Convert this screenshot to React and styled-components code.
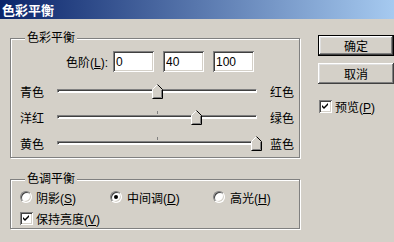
import React from "react";
import styled, { createGlobalStyle } from "styled-components";

/* ---------- global ---------- */

const GlobalStyle = createGlobalStyle`
  html, body {
    margin: 0;
    padding: 0;
    background: #d4d0c8;
  }
  body {
    width: 394px;
    height: 242px;
    overflow: hidden;
    font-family: "Liberation Sans", "Noto Sans CJK SC", sans-serif;
    font-size: 12px;
    color: #000;
  }
`;

/* ---------- styled components ---------- */

const Window = styled.div`
  width: 394px;
  height: 242px;
  background: #d4d0c8;
  display: flex;
  flex-direction: column;
  overflow: hidden;
`;

const TitleBar = styled.div`
  flex: none;
  height: 19px;
  padding-left: 2px;
  background: linear-gradient(to right, #0a246a, #a6caf0);
  color: #fff;
  font-weight: bold;
  font-size: 13px;
  line-height: 19px;
  font-family: "Noto Sans CJK SC", sans-serif;
`;

const Body = styled.div`
  display: flex;
  padding: 12px 0 0 10px;
`;

const LeftColumn = styled.div`
  width: 293px;
  display: flex;
  flex-direction: column;
  gap: 14px;
`;

const RightColumn = styled.div`
  margin: 4px 0 0 18px;
  display: flex;
  flex-direction: column;
`;

const Group = styled.fieldset`
  margin: 0;
  padding: 0 0 ${({ $pb }) => $pb}px;
  min-width: 0;
  border: 1px solid #808080;
  box-shadow: inset 1px 1px 0 #fff, 1px 1px 0 #fff;
`;

const Legend = styled.legend`
  margin-left: 14px;
  padding: 0 2px;
  line-height: 14px;
  background: #d4d0c8;
`;

const LevelRow = styled.div`
  display: flex;
  align-items: center;
  margin-top: 6px;
`;

const LevelLabel = styled.span`
  width: 97px;
  margin-right: 5px;
  text-align: right;
`;

const Inputs = styled.div`
  display: flex;
  gap: 9px;
`;

const NumberBox = styled.input`
  box-sizing: border-box;
  width: 41px;
  height: 21px;
  margin: 0;
  padding: 0 3px;
  border: none;
  outline: none;
  background: #fff;
  font-family: "Liberation Sans", sans-serif;
  font-size: 12px;
  color: #000;
  box-shadow: inset 1px 1px 0 #808080, inset -1px -1px 0 #fff,
    inset 2px 2px 0 #404040, inset -2px -2px 0 #d4d0c8;
`;

const Sliders = styled.div`
  margin-top: 6px;
`;

const SliderRow = styled.div`
  display: flex;
  align-items: center;
  height: 26px;
  padding-left: 9px;
`;

const SideLabel = styled.span`
  width: 37px;
  flex: none;
`;

const RightLabel = styled.span`
  margin-left: 13px;
`;

const Track = styled.div`
  position: relative;
  box-sizing: border-box;
  width: 200px;
  height: 4px;
  background: #fff;
  border: 1px solid;
  border-color: #808080 #fff #fff #808080;
  box-shadow: inset 1px 1px 0 #404040;
`;

const Tick = styled.div`
  position: absolute;
  left: 99px;
  top: -5px;
  width: 1px;
  height: 3px;
  background: #808080;
`;

const ThumbWrap = styled.svg`
  position: absolute;
  top: -6px;
  display: block;
`;

const OptionRow = styled.div`
  display: flex;
  align-items: center;
  height: 16px;
  padding-left: 9px;
  margin-top: ${({ $mt }) => $mt}px;
`;

const Option = styled.label`
  display: flex;
  align-items: center;
  width: ${({ $w }) => ($w ? `${$w}px` : "auto")};
  gap: ${({ $gap }) => $gap}px;
`;

const RadioDot = styled.span`
  position: relative;
  box-sizing: border-box;
  width: 12px;
  height: 12px;
  flex: none;
  border-radius: 50%;
  background: #fff;
  border: 1px solid;
  border-color: #808080 #fff #fff #808080;
  box-shadow: inset 1px 1px 0 #404040, inset -1px -1px 0 #d4d0c8;

  &::after {
    content: "";
    display: ${({ $on }) => ($on ? "block" : "none")};
    position: absolute;
    left: 3px;
    top: 3px;
    width: 4px;
    height: 4px;
    border-radius: 50%;
    background: #000;
  }
`;

const CheckBox = styled.span`
  box-sizing: border-box;
  width: 13px;
  height: 13px;
  flex: none;
  background: #fff;
  display: flex;
  align-items: center;
  justify-content: center;
  box-shadow: inset 1px 1px 0 #808080, inset -1px -1px 0 #fff,
    inset 2px 2px 0 #404040, inset -2px -2px 0 #d4d0c8;
`;

const Button = styled.button`
  box-sizing: border-box;
  width: 76px;
  height: 21px;
  margin: 0 0 ${({ $mb }) => $mb}px;
  padding: 0;
  background: #d4d0c8;
  font-family: "Liberation Sans", "Noto Sans CJK SC", sans-serif;
  font-size: 12px;
  color: #000;
  border: ${({ $default }) => ($default ? "1px solid #000" : "none")};
  box-shadow: inset -1px -1px 0 #404040, inset 1px 1px 0 #fff,
    inset -2px -2px 0 #808080, inset 2px 2px 0 #dfdfdf;
`;

const PreviewRow = styled.label`
  display: flex;
  align-items: center;
  gap: 3px;
  margin-left: 1px;
`;

/* ---------- parts ---------- */

const Thumb = ({ value }) => {
  const x = ((value + 100) / 200) * 198;
  return (
    <ThumbWrap width="11" height="15" viewBox="0 0 11 15" style={{ left: x - 5.5 }}>
      <polygon points="0.5,5.5 5.5,0.5 10.5,5.5 10.5,14.5 0.5,14.5" fill="#d4d0c8" />
      <path d="M0.5 14 V5.5 L5.5 0.5" stroke="#fff" fill="none" />
      <path d="M5.5 0.5 L10.5 5.5 V14.5 H0.5" stroke="#000" fill="none" />
      <path d="M9.5 6 V13.5 H1.5" stroke="#808080" fill="none" />
    </ThumbWrap>
  );
};

const Check = () => (
  <svg width="7" height="7" viewBox="0 0 7 7">
    <path d="M0 2 L2 4 L6 0 V2 L2 6 L0 4 Z" fill="#000" />
  </svg>
);

const sliders = [
  { left: "青色", right: "红色", value: 0 },
  { left: "洋红", right: "绿色", value: 40 },
  { left: "黄色", right: "蓝色", value: 100 },
];

/* ---------- component ---------- */

const App = () => (
  <Window>
    <GlobalStyle />
    <TitleBar>色彩平衡</TitleBar>
    <Body>
      <LeftColumn>
        {/* COLOR BALANCE */}
        <Group $pb={1}>
          <Legend>色彩平衡</Legend>
          <LevelRow>
            <LevelLabel>
              色阶(<u>L</u>):
            </LevelLabel>
            <Inputs>
              {sliders.map((s) => (
                <NumberBox key={s.left} readOnly value={s.value} />
              ))}
            </Inputs>
          </LevelRow>
          <Sliders>
            {sliders.map((s) => (
              <SliderRow key={s.left}>
                <SideLabel>{s.left}</SideLabel>
                <Track>
                  <Tick />
                  <Thumb value={s.value} />
                </Track>
                <RightLabel>{s.right}</RightLabel>
              </SliderRow>
            ))}
          </Sliders>
        </Group>

        {/* TONE BALANCE */}
        <Group $pb={2}>
          <Legend>色调平衡</Legend>
          <OptionRow $mt={3}>
            <Option $w={90} $gap={4}>
              <RadioDot />
              <span>阴影(<u>S</u>)</span>
            </Option>
            <Option $w={103} $gap={5}>
              <RadioDot $on />
              <span>中间调(<u>D</u>)</span>
            </Option>
            <Option $gap={5}>
              <RadioDot />
              <span>高光(<u>H</u>)</span>
            </Option>
          </OptionRow>
          <OptionRow $mt={5}>
            <Option $gap={3}>
              <CheckBox>
                <Check />
              </CheckBox>
              <span>保持亮度(<u>V</u>)</span>
            </Option>
          </OptionRow>
        </Group>
      </LeftColumn>

      {/* BUTTONS */}
      <RightColumn>
        <Button $default $mb={7}>确定</Button>
        <Button $mb={14}>取消</Button>
        <PreviewRow>
          <CheckBox>
            <Check />
          </CheckBox>
          <span>预览(<u>P</u>)</span>
        </PreviewRow>
      </RightColumn>
    </Body>
  </Window>
);

export default App;
